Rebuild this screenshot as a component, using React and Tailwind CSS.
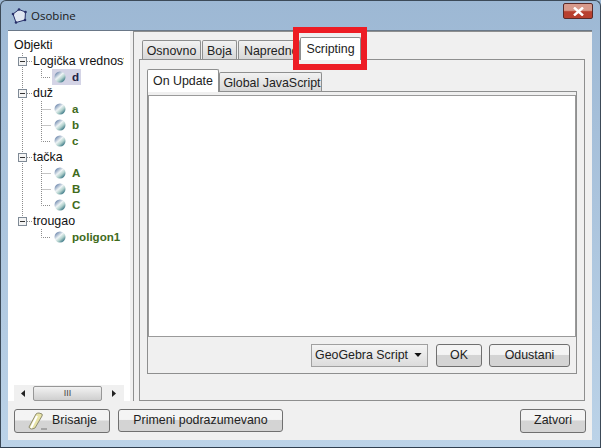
const font = { fontFamily: '"Liberation Sans", Arial, sans-serif' };

const Ball = () => (
  <svg width="12" height="12" viewBox="0 0 12 12" className="shrink-0">
    <defs>
      <linearGradient id="ball" x1="0.15" y1="0.1" x2="0.85" y2="0.9">
        <stop offset="0" stopColor="#6c86ac" />
        <stop offset="0.42" stopColor="#eef4f5" />
        <stop offset="0.68" stopColor="#b0d0cc" />
        <stop offset="1" stopColor="#327080" />
      </linearGradient>
    </defs>
    <circle cx="6" cy="6" r="5.5" fill="url(#ball)" />
  </svg>
);

// connectors of one row: vertical trunk at x=22, elbow at x=41
const Lines = ({ kind, trunk, trunkEnd, last }) => (
  <svg width="38" height="16" className="shrink-0" stroke="#8c8c8c" strokeDasharray="1 1" fill="none">
    {trunk && <path d={trunkEnd ? 'M8.5 0V5' : 'M8.5 0V16'} />}
    {kind === 'group' && (
      <>
        <path d="M13 8.5H19" />
        <rect x="4.5" y="4.5" width="8" height="8" fill="#f4f4f4" stroke="#7f8a96" strokeDasharray="none" />
        <path d="M6 8.5H11" stroke="#333" strokeDasharray="none" />
      </>
    )}
    {kind === 'leaf' && <path d={last ? 'M27.5 0V8.5H37' : 'M27.5 0V16M27.5 8.5H37'} />}
  </svg>
);

const Group = ({ label, trunkEnd }) => (
  <div className="flex h-4 items-center">
    <Lines kind="group" trunk trunkEnd={trunkEnd} />
    <span className="ml-[-19px] whitespace-nowrap text-[12.4px] leading-4 text-[#111]">{label}</span>
  </div>
);

const Leaf = ({ label, trunk = true, last, selected }) => (
  <div className="flex h-4 items-center">
    <Lines kind="leaf" trunk={trunk} last={last} />
    <div className={`flex h-4 items-center gap-[6px] px-[2px] ${selected ? 'bg-[#d4d4e6]' : ''}`}>
      <Ball />
      <span className={`whitespace-nowrap text-[11.6px] font-bold leading-4 ${selected ? 'text-[#222244]' : 'text-[#3f6b1c]'}`}>{label}</span>
    </div>
  </div>
);

const Tab = ({ label, active, className = '' }) => (
  <div
    className={`flex items-center justify-center overflow-hidden whitespace-nowrap rounded-t-[2px] border border-b-0 border-[#8e8f8f] text-[12.4px] text-[#222] ${
      active ? 'bg-white' : 'bg-gradient-to-b from-[#f2f2f2] to-[#d8d8d8] pt-[2px]'
    } ${className}`}
  >
    {label}
  </div>
);

const Button = ({ children, className = '' }) => (
  <button
    className={`flex items-center justify-center rounded-[3px] border border-[#707070] bg-gradient-to-b from-[#f4f4f4] from-45% to-[#d4d4d4] to-50% text-[12.4px] text-[#222] ${className}`}
  >
    {children}
  </button>
);

const Eraser = () => (
  <svg width="22" height="20" viewBox="0 0 22 20" className="shrink-0">
    <path d="M2 16 L9 3 Q10 2 12 2 L15 3 Q15.5 4 15 5 L8 17 Q6 18 4 18 Q2 17 2 16Z" fill="#e8e4a8" stroke="#8f8d70" />
    <path d="M4 17 L10 5" stroke="#fff" strokeWidth="2" />
    <path d="M14 18H20" stroke="#777" />
  </svg>
);

const Arrow = ({ dir }) => (
  <svg width="5" height="7" viewBox="0 0 5 7" fill="#222">
    <path d={dir === 'left' ? 'M4 0V7L0 3.5Z' : 'M1 0V7L5 3.5Z'} />
  </svg>
);

export default function App() {
  return (
    <div style={font} className="relative h-[448px] w-[601px] overflow-hidden bg-gradient-to-b from-[#9db8d4] to-[#bcd3e8]">
      <div className="flex h-full flex-col rounded-t-[6px] border border-[#3c4a58] border-b-[#2f3f4f] pb-[7px] pl-[7px] pr-[8px]">
        {/* title bar */}
        <div className="flex h-[29px] shrink-0 items-center pl-[2px]">
          <svg width="18" height="18" viewBox="0 0 18 18" fill="#dfe6f2" stroke="#27306a" strokeWidth="1">
            <path d="M3 7 L9 2.5 L15.5 5 L15 13 L6 15.5 Z" />
            <g fill="#27306a" stroke="none">
              <circle cx="3" cy="7" r="1.3" />
              <circle cx="9" cy="2.5" r="1.3" />
              <circle cx="15.5" cy="5" r="1.3" />
              <circle cx="15" cy="13" r="1.3" />
              <circle cx="6" cy="15.5" r="1.3" />
            </g>
          </svg>
          <span style={{ fontFamily: '"Open Sans", sans-serif' }} className="ml-[3px] text-[11.5px] text-[#1a1a1a]">Osobine</span>
          <div className="ml-auto mr-[-1px] mt-[-9px] flex h-[16px] w-[30px] items-center justify-center rounded-[2px] border border-[#5a2a28] bg-gradient-to-b from-[#d89a8c] from-45% to-[#b8402f] to-55%">
            <svg width="11" height="9" viewBox="0 0 11 9" stroke="#fff" strokeWidth="2.4">
              <path d="M1 0.5L10 8.5M10 0.5L1 8.5" />
            </svg>
          </div>
        </div>

        {/* client area */}
        <div className="flex min-h-0 flex-1 flex-col border-t border-[#6a7888] bg-[#f0f0f0]">
          <div className="flex h-[370px] shrink-0">
            {/* tree */}
            <div className="flex w-[122px] shrink-0 flex-col bg-white">
              <div className="min-h-0 flex-1 px-[6px] pt-[6px]">
                <div className="h-full overflow-hidden">
                  <div className="h-4 text-[12.4px] leading-4 text-[#111]">Objekti</div>
                  <Group label="Logička vrednost" />
                  <Leaf label="d" last selected />
                  <Group label="duž" />
                  <Leaf label="a" />
                  <Leaf label="b" />
                  <Leaf label="c" last />
                  <Group label="tačka" />
                  <Leaf label="A" />
                  <Leaf label="B" />
                  <Leaf label="C" last />
                  <Group label="trougao" trunkEnd />
                  <Leaf label="poligon1" trunk={false} last />
                </div>
              </div>
              {/* horizontal scrollbar */}
              <div className="mx-[6px] mb-[-1px] flex h-[17px] shrink-0 items-center bg-[#f0f0f0]">
                <div className="flex w-[19px] justify-center"><Arrow dir="left" /></div>
                <div className="flex h-[15px] w-[69px] items-center justify-center rounded-[2px] border border-[#979797] bg-gradient-to-b from-[#f2f2f2] to-[#cfcfcf] text-[9px] leading-none text-[#444]">
                  III
                </div>
                <div className="flex flex-1 justify-center"><Arrow dir="right" /></div>
              </div>
            </div>

            {/* right pane */}
            <div className="ml-[3px] flex min-w-0 flex-1 flex-col border-l border-t border-[#8e8f8f] pl-[5px] pr-[7px] pt-[7px]">
              <div className="flex h-[20px] shrink-0 items-end pl-[3px]">
                <Tab label="Osnovno" className="h-[19px] w-[59px]" />
                <Tab label="Boja" className="ml-[1px] h-[19px] w-[35px]" />
                <Tab label={<span className="w-full pl-[5px]">Napredno</span>} className="ml-[1px] h-[19px] w-[62px]" />
                <Tab label="Scripting" active className="relative z-10 mb-[-1px] h-[23px] w-[61px]" />
              </div>
              <div className="flex min-h-0 flex-1 flex-col border border-[#8e8f8f] px-[7px] pb-[26px] pt-[9px]">
                <div className="flex h-[22px] shrink-0 items-end">
                  <Tab label="On Update" active className="relative z-10 mb-[-1px] h-[23px] w-[72px]" />
                  <Tab label={<span className="pl-[3px]">Global JavaScript</span>} className="h-[19px] w-[103px]" />
                </div>
                <div className="flex min-h-0 flex-1 flex-col border border-[#8e8f8f]">
                  <div className="mt-[3px] flex-1 border border-[#9a9a9a] bg-white" />
                  <div className="flex h-[36px] shrink-0 items-center justify-end pr-[6px]">
                    <div className="flex h-[23px] w-[117px] items-center justify-between whitespace-nowrap border border-[#a0a0a0] bg-gradient-to-b from-[#f4f4f4] to-[#dcdcdc] pl-[3px] pr-[5px] text-[12.4px] text-[#222]">
                      GeoGebra Script
                      <svg width="8" height="4" viewBox="0 0 9 5" fill="#111"><path d="M0 0H9L4.5 5Z" /></svg>
                    </div>
                    <Button className="ml-[8px] h-[23px] w-[46px]">OK</Button>
                    <Button className="ml-[7px] h-[23px] w-[81px]">Odustani</Button>
                  </div>
                </div>
              </div>
            </div>
          </div>

          {/* bottom bar */}
          <div className="flex flex-1 items-center pl-[6px] pr-[6px]">
            <Button className="h-[24px] w-[96px] gap-[3px]"><Eraser />Brisanje</Button>
            <Button className="ml-[8px] h-[23px] w-[165px]">Primeni podrazumevano</Button>
            <Button className="ml-auto h-[24px] w-[66px]">Zatvori</Button>
          </div>
        </div>
      </div>

      {/* red highlight drawn over the screenshot */}
      <div className="absolute left-[293px] top-[27px] z-20 h-[43px] w-[74px] border-[6px] border-[#ed1c24]" />
    </div>
  );
}
